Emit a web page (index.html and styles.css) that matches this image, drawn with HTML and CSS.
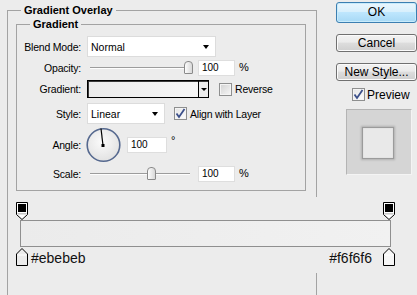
FILE: index.html
```html
<!DOCTYPE html>
<html lang="en">
<head>
    <meta charset="UTF-8">
    <title>Layer Style - Gradient Overlay</title>
    <link rel="stylesheet" href="styles.css">
</head>
<body>

    <div class="dialog">
        <!-- Left: settings -->
        <div class="group outer">
            <div class="legend">Gradient Overlay</div>

            <div class="group inner">
                <div class="legend">Gradient</div>

                <div class="row row-blend">
                    <span class="label">Blend Mode:</span>
                    <div class="select select-blend"><span>Normal</span><span class="arrow"></span></div>
                </div>

                <div class="row row-opacity">
                    <span class="label">Opacity:</span>
                    <div class="slider">
                        <div class="track"></div>
                        <div class="thumb" style="left: 94px;"></div>
                    </div>
                    <div class="num">100</div>
                    <span class="unit">%</span>
                </div>

                <div class="row row-gradient">
                    <span class="label">Gradient:</span>
                    <div class="gradient-pick">
                        <div class="swatch"></div>
                        <div class="drop"><span class="arrow"></span></div>
                    </div>
                    <span class="check"></span>
                    <span class="check-text">Reverse</span>
                </div>

                <div class="row row-style">
                    <span class="label">Style:</span>
                    <div class="select select-style"><span>Linear</span><span class="arrow"></span></div>
                    <span class="check checked">
                        <svg width="11" height="11" viewBox="0 0 11 11"><path d="M1.5 5.5 L4 9 L9.5 1" fill="none" stroke="#3b4f8a" stroke-width="1.8"/></svg>
                    </span>
                    <span class="check-text">Align with Layer</span>
                </div>

                <div class="row row-angle">
                    <span class="label">Angle:</span>
                    <svg class="dial" width="35" height="36" viewBox="0 0 35 36">
                        <defs>
                            <radialGradient id="dialFill" cx="45%" cy="40%" r="60%">
                                <stop offset="0" stop-color="#fbfbfb"/>
                                <stop offset="1" stop-color="#e2e2e2"/>
                            </radialGradient>
                        </defs>
                        <circle cx="17.5" cy="18" r="16.3" fill="url(#dialFill)" stroke="#56698f" stroke-width="1.6"/>
                        <line x1="17" y1="18.5" x2="15" y2="1.5" stroke="#000" stroke-width="1.2"/>
                        <rect x="15.5" y="17" width="3" height="3" fill="#000"/>
                    </svg>
                    <div class="num num-angle">100</div>
                    <span class="degree">°</span>
                </div>

                <div class="row row-scale">
                    <span class="label">Scale:</span>
                    <div class="slider">
                        <div class="track"></div>
                        <div class="thumb" style="left: 57px;"></div>
                    </div>
                    <div class="num">100</div>
                    <span class="unit">%</span>
                </div>
            </div>

            <!-- Gradient editor strip -->
            <div class="editor">
                <div class="stops">
                    <svg width="12" height="18" viewBox="0 0 12 18"><path d="M0.5 0.5 H11.5 V12.5 L6 17.5 L0.5 12.5 Z" fill="#fff" stroke="#000"/><rect x="1.5" y="11" width="9" height="1.5" fill="#c8c8c8"/><rect x="2" y="2" width="8" height="8" fill="#000"/></svg>
                    <svg width="12" height="18" viewBox="0 0 12 18"><path d="M0.5 0.5 H11.5 V12.5 L6 17.5 L0.5 12.5 Z" fill="#fff" stroke="#000"/><rect x="1.5" y="11" width="9" height="1.5" fill="#c8c8c8"/><rect x="2" y="2" width="8" height="8" fill="#000"/></svg>
                </div>
                <div class="bar"></div>
                <div class="stops stops-color">
                    <div class="stop-item">
                        <svg width="12" height="18" viewBox="0 0 12 18"><path d="M6 0.5 L11.5 6 V17.5 H0.5 V6 Z" fill="#ebebeb" stroke="#000"/><path d="M1.5 7 H10.5" stroke="#fff"/></svg>
                        <span class="hex">#ebebeb</span>
                    </div>
                    <div class="stop-item">
                        <span class="hex hex-right">#f6f6f6</span>
                        <svg width="12" height="18" viewBox="0 0 12 18"><path d="M6 0.5 L11.5 6 V17.5 H0.5 V6 Z" fill="#f6f6f6" stroke="#000"/><path d="M1.5 7 H10.5" stroke="#fff"/></svg>
                    </div>
                </div>
            </div>
        </div>

        <!-- Right: buttons and preview -->
        <div class="side">
            <div class="btn btn-default">OK</div>
            <div class="btn">Cancel</div>
            <div class="btn">New Style...</div>
            <div class="preview-row">
                <span class="check checked">
                    <svg width="11" height="11" viewBox="0 0 11 11"><path d="M1.5 5.5 L4 9 L9.5 1" fill="none" stroke="#3b4f8a" stroke-width="1.8"/></svg>
                </span>
                <span class="preview-text">Preview</span>
            </div>
            <div class="preview-box">
                <div class="preview-square"></div>
            </div>
        </div>
    </div>

</body>
</html>
```

FILE: styles.css
```css
* {
    margin: 0;
    padding: 0;
    box-sizing: border-box;
}

body {
    font-family: 'Liberation Sans', Arial, sans-serif;
    font-size: 10.5px;
    background-color: #ececec;
    color: #000;
    width: 417px;
    height: 295px;
    overflow: hidden;
}

.dialog {
    display: flex;
    align-items: flex-start;
    padding-left: 7px;
}

/* Group boxes */
.group {
    border: 1px solid #a3a3a3;
}

.outer {
    width: 310px;
    height: 285px;
    margin-top: 10px;
    border-bottom: none;
}

.inner {
    width: 290px;
    margin: 7px 0 0 8px;
    padding-bottom: 6px;
}

.legend {
    display: table;
    margin: -7px 0 0 13px;
    padding: 0 3px;
    height: 13px;
    line-height: 13px;
    font-size: 11px;
    font-weight: bold;
    background-color: #ececec;
}

/* Rows */
.row {
    display: flex;
    align-items: center;
}

.label {
    width: 64px;
    margin-right: 6px;
    text-align: right;
    letter-spacing: -0.2px;
}

.row-blend { height: 21px; margin-top: 5px; }
.row-opacity { height: 20px; margin-top: 1px; }
.row-gradient { height: 20px; margin-top: 1px; }
.row-style { height: 21px; margin-top: 4px; }
.row-angle { height: 37px; margin-top: 2px; }
.row-scale { height: 20px; margin-top: 1px; }

.select {
    display: flex;
    align-items: center;
    justify-content: space-between;
    height: 21px;
    padding: 0 6px 0 3px;
    background-color: #fff;
    border: 1px solid #dcdcdc;
}

.select-blend { width: 129px; }
.select-style { width: 78px; }

.arrow {
    width: 0;
    height: 0;
    border-left: 3.5px solid transparent;
    border-right: 3.5px solid transparent;
    border-top: 4px solid #000;
}

/* Sliders */
.slider {
    position: relative;
    width: 100px;
    height: 14px;
    margin: 0 8px 0 3px;
}

.track {
    margin-top: 6px;
    height: 2px;
    border-top: 1px solid #9c9c9c;
    border-bottom: 1px solid #fdfdfd;
}

.thumb {
    position: absolute;
    top: 0;
    width: 9px;
    height: 13px;
    border: 1px solid #8a8a8a;
    border-radius: 4px 4px 1px 1px;
    background: linear-gradient(to right, #fdfdfd, #d8d8d8);
}

.num {
    width: 37px;
    height: 16px;
    line-height: 14px;
    padding-left: 3px;
    font-size: 10px;
    background-color: #fff;
    border: 1px solid #dedede;
}

.unit {
    margin: -3px 0 0 4px;
    font-size: 11px;
}

/* Gradient picker */
.gradient-pick {
    display: flex;
    width: 122px;
    height: 18px;
    border: 1px solid #000;
    box-shadow: inset 1px 1px 0 #3a3a3a;
}

.swatch {
    flex: 1;
    background: linear-gradient(to right, #ebebeb, #f6f6f6);
    margin: 1px 0 0 1px;
}

.drop {
    width: 10px;
    display: flex;
    align-items: center;
    justify-content: center;
    border-left: 1px solid #000;
}

.drop .arrow {
    border-left-width: 3px;
    border-right-width: 3px;
    border-top-width: 3px;
}

/* Checkboxes */
.check {
    display: flex;
    align-items: center;
    justify-content: center;
    width: 13px;
    height: 13px;
    border: 1px solid #8e8f8f;
    background: linear-gradient(135deg, #d2d2d2, #f7f7f7);
    box-shadow: inset 0 0 0 1px #f4f4f4;
}

.check.checked {
    background: linear-gradient(135deg, #e4e4e4, #fdfdfd);
}

.row-gradient .check { margin-left: 10px; }
.row-style .check { margin-left: 9px; }

.check-text {
    margin-left: 3px;
    letter-spacing: -0.2px;
}

/* Angle */
.dial {
    display: block;
    margin-left: -1px;
}

.num-angle {
    width: 40px;
    margin-left: 6px;
}

.degree {
    align-self: flex-start;
    margin: 8px 0 0 4px;
    font-size: 11px;
}

/* Gradient editor strip */
.editor {
    height: 76px;
    margin: 6px -101px 0 0;
    padding-top: 5px;
    background-color: #ececec;
}

.stops {
    display: flex;
    justify-content: space-between;
    width: 379px;
    height: 18px;
    margin-left: 8px;
}

.stops svg {
    display: block;
}

.bar {
    width: 371px;
    height: 27px;
    margin-left: 12px;
    border: 1px solid #8f8f8f;
    background: linear-gradient(to right, #ebebeb, #f1f1f1);
}

.stops-color {
    margin-top: 1px;
}

.stop-item {
    display: flex;
    align-items: flex-start;
}

.hex {
    margin: 1px 0 0 3px;
    font-size: 14px;
    line-height: 18px;
    color: #111;
}

.hex-right {
    margin: 1px 11px 0 0;
}

/* Right column */
.side {
    width: 81px;
    margin: 2px 0 0 19px;
    display: flex;
    flex-direction: column;
}

.btn {
    height: 18px;
    margin-top: 11px;
    line-height: 16px;
    text-align: center;
    font-size: 12px;
    border: 1px solid #707070;
    border-radius: 3px;
    background: linear-gradient(to bottom, #f2f2f2 0%, #ebebeb 45%, #dddddd 50%, #cfcfcf 100%);
    box-shadow: inset 0 0 0 1px #fbfbfb;
}

.btn-default {
    height: 21px;
    margin-top: 0;
    line-height: 19px;
    border-color: #3c7fb1;
    background: linear-gradient(to bottom, #eaf6fd 0%, #d9f0fc 45%, #bee6fd 50%, #a7d9f5 100%);
    box-shadow: inset 0 0 0 1px #c8ebfb;
}

.preview-row {
    display: flex;
    align-items: center;
    margin: 7px 0 0 16px;
    height: 13px;
}

.preview-text {
    margin-left: 2px;
    font-size: 12px;
}

.preview-box {
    display: flex;
    align-items: center;
    justify-content: center;
    width: 66px;
    height: 66px;
    margin: 8px 0 0 10px;
    background-color: #d5d5d5;
    border: 1px solid #b4b4b4;
    border-right-color: #f4f4f4;
    border-bottom-color: #f4f4f4;
}

.preview-square {
    width: 32px;
    height: 32px;
    margin: 1px 2px 0 0;
    background-color: #e9e9e9;
    border: 1px solid #9b9b9b;
    box-shadow: 0 0 2px 1px rgba(0, 0, 0, 0.18), inset 0 0 1px #bbb;
}
```
